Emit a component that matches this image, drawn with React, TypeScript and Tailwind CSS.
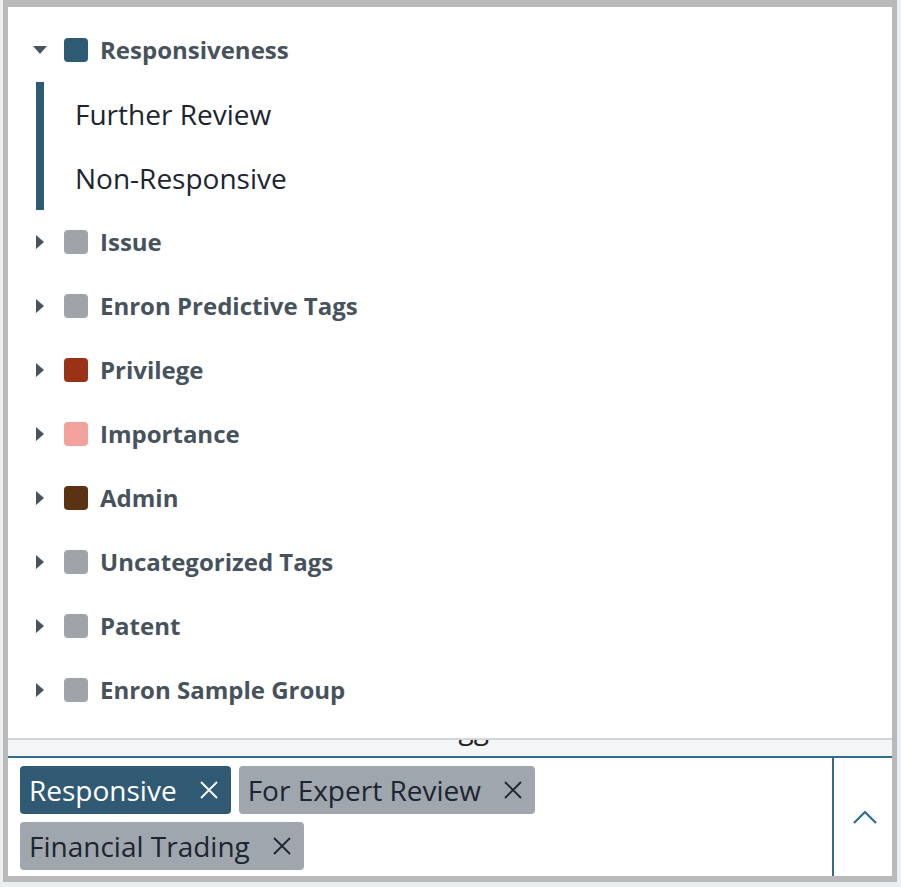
import React from 'react';

type Group = { name: string; color: string; open?: boolean; children?: string[] };

const groups: Group[] = [
  { name: 'Responsiveness', color: 'bg-[#2f5a74]', open: true, children: ['Further Review', 'Non-Responsive'] },
  { name: 'Issue', color: 'bg-[#9ea4aa]' },
  { name: 'Enron Predictive Tags', color: 'bg-[#9ea4aa]' },
  { name: 'Privilege', color: 'bg-[#9a3218]' },
  { name: 'Importance', color: 'bg-[#f2a19d]' },
  { name: 'Admin', color: 'bg-[#5b3213]' },
  { name: 'Uncategorized Tags', color: 'bg-[#9ea4aa]' },
  { name: 'Patent', color: 'bg-[#9ea4aa]' },
  { name: 'Enron Sample Group', color: 'bg-[#9ea4aa]' },
];

const Caret = ({ open }: { open?: boolean }) => (
  <div className="w-6 h-6 flex items-center justify-center">
    {open ? (
      <svg width="14" height="8" viewBox="0 0 14 8">
        <path d="M0 0 H14 L7 8 Z" fill="#4a545d" />
      </svg>
    ) : (
      <svg width="8" height="14" viewBox="0 0 8 14">
        <path d="M0 0 L8 7 L0 14 Z" fill="#4a545d" />
      </svg>
    )}
  </div>
);

const CloseX = ({ color }: { color: string }) => (
  <svg width="18" height="18" viewBox="0 0 18 18" className="shrink-0">
    <path d="M1 1 L17 17 M17 1 L1 17" stroke={color} strokeWidth="1.8" />
  </svg>
);

const Tag = ({ label, dark }: { label: string; dark?: boolean }) => (
  <div
    className={`h-12 rounded-[4px] flex items-center pl-[9px] pr-[13px] gap-[23px] text-[28px] ${
      dark ? 'bg-[#305a74] text-white' : 'bg-[#a0a6ad] text-[#1c2530]'
    }`}
  >
    <span className="leading-none">{label}</span>
    <CloseX color={dark ? '#ffffff' : '#1c2530'} />
  </div>
);

export default function App() {
  return (
    <div className="w-[901px] h-[887px] bg-[#eaeff1] overflow-hidden" style={{ fontFamily: '"Open Sans", "Noto Sans", sans-serif' }}>
      <div className="ml-[3px] w-[894px] h-[882px] border-x-[5px] border-t-[7px] border-b-[6px] border-[#b9b9b9] bg-white flex flex-col">
        {/* tree dropdown */}
        <div className="h-[733px] border-b-2 border-[#d3d6d8] pt-[11px]">
          {groups.map((g) => (
            <div key={g.name}>
              <div className="h-16 flex items-center pl-5 gap-3">
                <Caret open={g.open} />
                <div className={`w-6 h-6 rounded-[4px] ${g.color}`} />
                <span className="text-[24px] font-bold text-[#46525c]">{g.name}</span>
              </div>
              {g.open && g.children && (
                <div className="ml-[28px] border-l-[8px] border-[#2f5a74]">
                  {g.children.map((c) => (
                    <div key={c} className="h-16 flex items-center pl-[31px] text-[28px] text-[#1c2530]">
                      {c}
                    </div>
                  ))}
                </div>
              )}
            </div>
          ))}
        </div>

        {/* strip behind the list: only the descenders of the label show */}
        <div className="h-[16px] bg-[#f3f5f6] overflow-hidden">
          <div className="ml-[418px] -mt-[26px] text-[28px] text-[#222] leading-none">Suggested</div>
        </div>

        {/* tag input */}
        <div className="flex-1 border-t-2 border-[#2e6d8c] flex">
          <div className="flex-1 flex flex-wrap content-start gap-2 pl-3 pt-2 pr-2">
            <Tag label="Responsive" dark />
            <Tag label="For Expert Review" />
            <Tag label="Financial Trading" />
          </div>
          <div className="w-[60px] border-l-2 border-[#2e6d8c] flex items-center justify-center pl-1">
            <svg width="24" height="14" viewBox="0 0 24 14">
              <path d="M1 13 L12 2 L23 13" stroke="#2e6d8c" strokeWidth="2.2" fill="none" />
            </svg>
          </div>
        </div>
      </div>
    </div>
  );
}
